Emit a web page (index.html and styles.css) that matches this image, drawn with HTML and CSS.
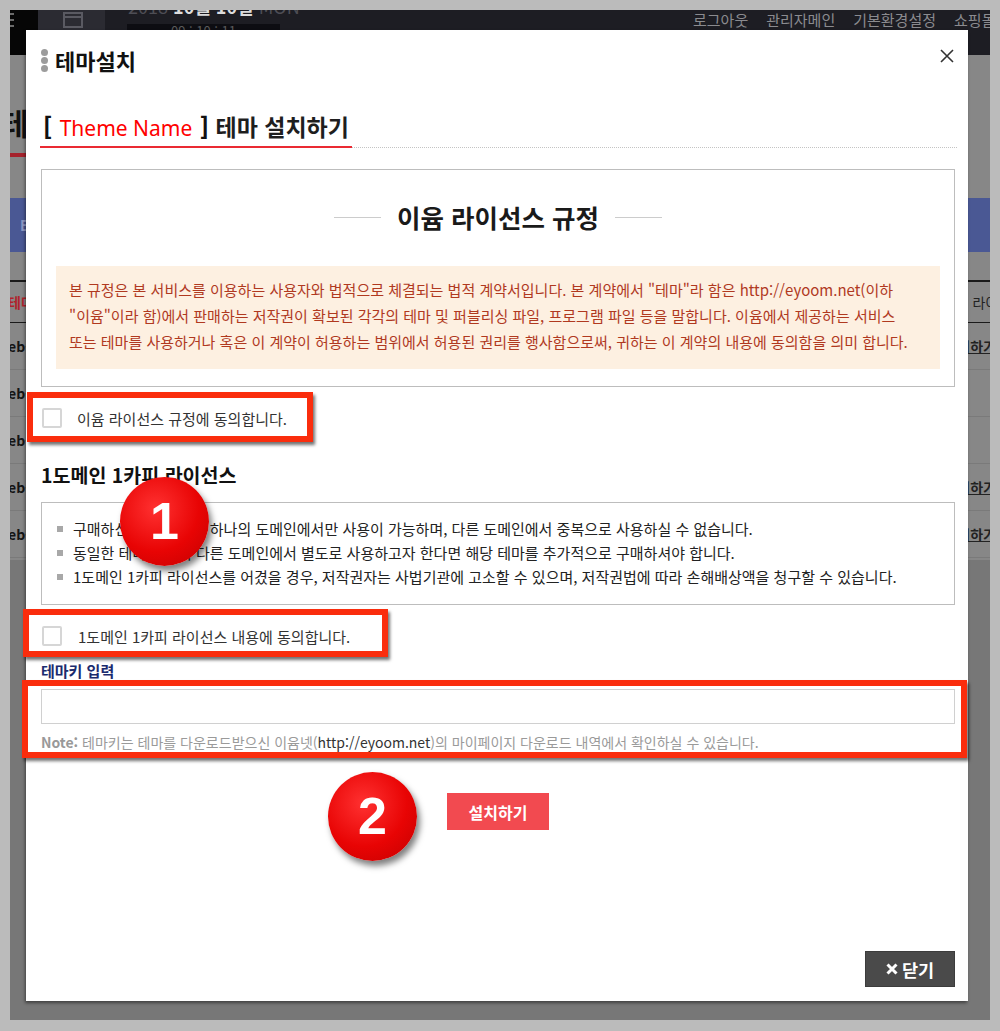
FILE: index.html
```html
<!DOCTYPE html>
<html lang="ko">
<head>
<meta charset="utf-8">
<title>테마설치</title>
<link rel="stylesheet" href="styles.css">
</head>
<body>
<div class="screen">
  <div class="page">
    <header class="topbar">
      <div class="tb-black"><i></i><i></i><i></i></div>
      <div class="tb-panel">
        <svg class="win-icon" width="20" height="16" viewBox="0 0 20 16"><rect x="1" y="1" width="18" height="14" fill="none" stroke="#5a5a62" stroke-width="2"/><line x1="1" y1="5" x2="19" y2="5" stroke="#5a5a62" stroke-width="2"/></svg>
      </div>
      <div class="tb-date">
        <div class="date-line"><span class="dim">2018</span> <b>10월 10일</b> <span class="dim">MON</span></div>
        <div class="clock">09 : 10 : 11</div>
      </div>
      <nav class="tb-nav"><span>로그아웃</span><span>관리자메인</span><span>기본환경설정</span><span>쇼핑몰관리</span></nav>
    </header>
    <main class="content">
      <h1 class="pg-title">테마 관리</h1>
      <div class="pg-bar">E</div>
      <div class="pg-table">
        <div class="pg-row pg-head"><span class="c-left red">테마</span><span class="c-right c-head">라이선스</span></div>
        <div class="pg-row"><span class="c-left">eb-</span><span class="c-right u">설치하기</span></div>
        <div class="pg-row"><span class="c-left">eb-</span><span class="c-right"></span></div>
        <div class="pg-row"><span class="c-left">eb-</span><span class="c-right"></span></div>
        <div class="pg-row"><span class="c-left">eb-</span><span class="c-right u">설치하기</span></div>
        <div class="pg-row"><span class="c-left">eb-</span><span class="c-right u">설치하기</span></div>
      </div>
    </main>
  </div>

  <div class="modal">
    <div class="m-head">
      <span class="dots"><i></i><i></i><i></i></span>
      <h1 class="m-title">테마설치</h1>
      <svg class="m-close" width="14" height="14" viewBox="0 0 14 14"><path d="M1 1L13 13M13 1L1 13" stroke="#333" stroke-width="1.6"/></svg>
    </div>

    <div class="sec-title">
      <h2><b class="br">[</b> <span class="tn">Theme Name</span> <b class="br">]</b> 테마 설치하기</h2>
      <span class="sec-rule"></span>
    </div>

    <section class="lic-box">
      <div class="lic-head"><h3>이윰 라이선스 규정</h3></div>
      <p class="notice">본 규정은 본 서비스를 이용하는 사용자와 법적으로 체결되는 법적 계약서입니다. 본 계약에서 "테마"라 함은 http://eyoom.net(이하<br>"이윰"이라 함)에서 판매하는 저작권이 확보된 각각의 테마 및 퍼블리싱 파일, 프로그램 파일 등을 말합니다. 이윰에서 제공하는 서비스<br>또는 테마를 사용하거나 혹은 이 계약이 허용하는 범위에서 허용된 권리를 행사함으로써, 귀하는 이 계약의 내용에 동의함을 의미 합니다.</p>
    </section>

    <label class="agree"><input type="checkbox" class="cb"><span>이윰 라이선스 규정에 동의합니다.</span></label>

    <h3 class="sub-title">1도메인 1카피 라이선스</h3>
    <ul class="rules">
      <li>구매하신 테마는 오직 하나의 도메인에서만 사용이 가능하며, 다른 도메인에서 중복으로 사용하실 수 없습니다.</li>
      <li>동일한 테마를 여러 다른 도메인에서 별도로 사용하고자 한다면 해당 테마를 추가적으로 구매하셔야 합니다.</li>
      <li>1도메인 1카피 라이선스를 어겼을 경우, 저작권자는 사법기관에 고소할 수 있으며, 저작권법에 따라 손해배상액을 청구할 수 있습니다.</li>
    </ul>

    <label class="agree agree-2"><input type="checkbox" class="cb"><span>1도메인 1카피 라이선스 내용에 동의합니다.</span></label>

    <div class="key-label">테마키 입력</div>
    <input type="text" class="key-input">
    <p class="note"><b>Note:</b> 테마키는 테마를 다운로드받으신 이윰넷(<span class="url">http://eyoom.net</span>)의 마이페이지 다운로드 내역에서 확인하실 수 있습니다.</p>

    <div class="submit-row"><button class="btn-submit">설치하기</button></div>

    <div class="m-foot">
      <button class="btn-close"><svg width="12" height="12" viewBox="0 0 12 12"><path d="M1.5 1.5L10.5 10.5M10.5 1.5L1.5 10.5" stroke="#fff" stroke-width="3"/></svg>닫기</button>
    </div>
  </div>

  <div class="mark mark-1"></div>
  <div class="mark mark-2"></div>
  <div class="mark mark-3"></div>
  <div class="badge badge-1">1</div>
  <div class="badge badge-2">2</div>
</div>
</body>
</html>
```
FILE: styles.css
```css
* { box-sizing: border-box; }
html, body { margin: 0; padding: 0; }
body {
  background: #bbbbbb;
  padding: 10px;
  font-family: "Noto Sans CJK KR", "Noto Sans", sans-serif;
}
.screen {
  position: relative;
  width: 980px;
  height: 1010px;
  overflow: hidden;
  background: #777777;
}

/* ---------- dimmed background page ---------- */
.topbar {
  display: flex;
  height: 45px;
  background: #1d1d23;
  white-space: nowrap;
}
.topbar > * { flex: none; }
.tb-black {
  width: 28px;
  background: #060606;
  padding-top: 3px;
  display: flex;
  flex-direction: column;
  gap: 4px;
}
.tb-black i { display: block; width: 4px; height: 2px; background: #6a6a6a; }
.tb-panel { width: 67px; background: #2b2b32; padding: 2px 0 0 25px; }
.win-icon { display: block; }
.tb-date { margin-left: 22px; width: 153px; }
.date-line {
  margin-top: -16px;
  height: 24px;
  line-height: 24px;
  font-size: 18px;
  color: #4e4e55;
  padding-left: 1px;
}
.date-line b { color: #dcdcdc; }
.clock {
  margin-top: 6px;
  height: 30px;
  background: #0d0d12;
  color: #5a5a5a;
  font-size: 13px;
  line-height: 14px;
  text-align: center;
}
.tb-nav {
  margin-left: 413px;
  display: flex;
  gap: 18px;
  font-size: 15px;
  line-height: 20px;
  color: #8b8b8f;
}
.content { background: #878787; height: 505px; overflow: hidden; }
.pg-title {
  margin: 47px 0 0 -9px;
  width: 160px;
  font-size: 30px;
  line-height: 40px;
  font-weight: 700;
  color: #111;
  padding-bottom: 11px;
  border-bottom: 4px solid #a5222c;
}
.pg-bar {
  margin-top: 41px;
  height: 54px;
  background: #4a5894;
  color: #8f99c4;
  font-size: 14px;
  font-weight: 700;
  line-height: 54px;
  padding-left: 10px;
}
.pg-table { margin-top: 28px; border-top: 2px solid #1a1a1a; }
.pg-row {
  display: flex;
  justify-content: space-between;
  align-items: center;
  height: 47px;
  border-bottom: 1px solid #7a7a7a;
  font-size: 14px;
  font-weight: 700;
  color: #151515;
}
.pg-head { height: 41px; border-bottom: 1px solid #1a1a1a; }
.c-left { margin-left: -2px; }
.c-right { margin-right: -6px; color: #222; }
.c-head { margin-right: -34px; font-weight: 400; }
.red { color: #b0232b; }
.u { text-decoration: underline; }

/* ---------- modal ---------- */
.modal {
  position: absolute;
  left: 16px;
  top: 20px;
  width: 942px;
  height: 971px;
  background: #fff;
  box-shadow: -1px 2px 3px rgba(0, 0, 0, 0.45);
  padding: 0 13px 14px 15px;
  display: flex;
  flex-direction: column;
  color: #222;
}
.m-head { height: 60px; display: flex; align-items: center; }
.dots { display: flex; flex-direction: column; gap: 1px; margin-right: 7px; }
.dots i { display: block; width: 7px; height: 7px; border-radius: 50%; background: #9c9c9c; }
.m-title {
  margin: 0;
  font-size: 22px;
  line-height: 30px;
  font-weight: 700;
  color: #111;
}
.m-close { margin-left: auto; align-self: flex-start; margin-top: 19px; margin-right: 1px; }

.sec-title {
  margin-top: 21px;
  display: flex;
  align-items: flex-end;
  margin-left: -1px;
  margin-right: -2px;
}
.sec-title h2 {
  margin: 0;
  padding: 0 3px 3px 3px;
  border-bottom: 2px solid #ea2a33;
  font-size: 23px;
  line-height: 30px;
  font-weight: 700;
  color: #1e1e1e;
  white-space: nowrap;
}
.sec-title .br { font-weight: 900; color: #111; }
.sec-rule { flex: 1; border-bottom: 1px dotted #c4c4c4; }
.sec-title .tn {
  font-family: "Noto Sans", sans-serif;
  font-size: 21px;
  font-weight: 400;
  color: #ff0000;
  padding: 0 1px;
}

.lic-box {
  margin-top: 21px;
  border: 1px solid #bdbdbd;
  padding: 30px 14px 17px;
}
.lic-head {
  display: flex;
  justify-content: center;
  align-items: center;
  gap: 16px;
}
.lic-head::before, .lic-head::after {
  content: "";
  width: 47px;
  height: 1px;
  background: #cccccc;
}
.lic-head h3 {
  margin: 0;
  font-size: 25.5px;
  line-height: 34px;
  font-weight: 700;
  color: #1a1a1a;
}
.notice {
  margin: 32px 0 0;
  background: #fdf0e1;
  padding: 11px 13px 14px;
  font-size: 15px;
  line-height: 26px;
  color: #b0391f;
  white-space: nowrap;
}

.agree {
  display: flex;
  align-items: center;
  gap: 15px;
  height: 20px;
  margin-top: 21px;
  font-size: 15px;
  color: #333;
}
.cb {
  appearance: none;
  -webkit-appearance: none;
  margin: 0 0 0 1px;
  width: 20px;
  height: 20px;
  border: 2px solid #d6d6d6;
  border-radius: 2px;
  background: #fff;
}
.sub-title {
  margin: 34px 0 0;
  font-size: 19.5px;
  line-height: 26px;
  font-weight: 700;
  color: #111;
}
.rules {
  list-style: none;
  margin: 14px 0 0;
  padding: 14px 15px 15px;
  border: 1px solid #bdbdbd;
  font-size: 15px;
  line-height: 24px;
  color: #222;
}
.rules li { display: flex; align-items: center; white-space: nowrap; }
.rules li::before {
  content: "";
  width: 6px;
  height: 6px;
  background: #a8a8a8;
  margin-right: 10px;
  flex: none;
}
.agree-2 { gap: 16px; }
.key-label {
  margin-top: 15px;
  font-size: 15px;
  line-height: 20px;
  font-weight: 700;
  color: #1b2b6e;
}
.key-input {
  display: block;
  margin-top: 8px;
  width: 100%;
  height: 35px;
  border: 1px solid #d0d0d0;
  outline: none;
  padding: 0 8px;
  font: inherit;
}
.note {
  margin: 9px 0 0;
  font-size: 14px;
  line-height: 18px;
  color: #9a9a9a;
  white-space: nowrap;
}
.note b { color: #999; }
.note .url { color: #333; }
.submit-row { margin-top: 42px; display: flex; justify-content: center; }
.btn-submit {
  width: 102px;
  height: 37px;
  border: 0;
  background: #f24a50;
  color: #fff;
  font-family: inherit;
  font-size: 16px;
  font-weight: 700;
  padding: 0;
}
.m-foot { margin-top: auto; display: flex; justify-content: flex-end; }
.btn-close {
  width: 90px;
  height: 36px;
  border: 1px solid #3c3c3c;
  background: #4a4a4a;
  color: #fff;
  font-family: inherit;
  font-size: 17.5px;
  font-weight: 700;
  display: flex;
  align-items: center;
  justify-content: center;
  gap: 4px;
  padding: 0;
}

/* ---------- annotation overlays ---------- */
.mark {
  position: absolute;
  border: 6px solid #fa2d0d;
  box-shadow: 2px 3px 3px rgba(0, 0, 0, 0.55);
}
.mark-1 { left: 17px; top: 382px; width: 286px; height: 50px; }
.mark-2 { left: 13px; top: 599px; width: 365px; height: 48px; }
.mark-3 { left: 12px; top: 670px; width: 945px; height: 78px; }
.badge {
  position: absolute;
  width: 89px;
  height: 89px;
  border-radius: 50%;
  background: radial-gradient(circle at 40% 35%, #ff3131 0%, #e80404 55%, #c20000 100%);
  box-shadow: 3px 5px 6px rgba(0, 0, 0, 0.5);
  color: #fff;
  font-family: "Liberation Sans", Arial, sans-serif;
  font-weight: 700;
  font-size: 52px;
  line-height: 89px;
  text-align: center;
}
.badge-1 { left: 110px; top: 467px; }
.badge-2 { left: 318px; top: 762px; }
```
